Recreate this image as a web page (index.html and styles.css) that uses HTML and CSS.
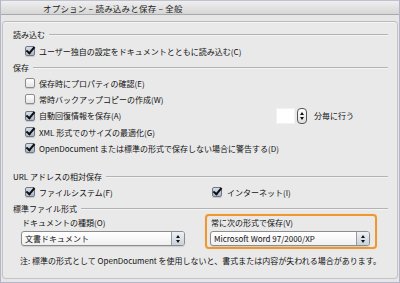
FILE: index.html
```html
<!DOCTYPE html>
<html lang="ja">
<head>
<meta charset="utf-8">
<link rel="stylesheet" href="styles.css">
</head>
<body>
<div class="window">
  <div class="titlebar"><span class="title">オプション – 読み込みと保存 – 全般</span></div>
  <div class="content">
    <div class="panel">
      <div class="head h1"><span>読み込む</span></div>
      <div class="row"><span class="cb on"></span><span>ユーザー独自の設定をドキュメントとともに読み込む(C)</span></div>

      <div class="head h2"><span>保存</span></div>
      <div class="row"><span class="cb"></span><span>保存時にプロパティの確認(E)</span></div>
      <div class="row"><span class="cb"></span><span>常時バックアップコピーの作成(W)</span></div>
      <div class="row tall">
        <div class="lbl-wide"><span class="cb on"></span><span>自動回復情報を保存(A)</span></div>
        <div class="spin">
          <span class="spin-field"></span>
          <span class="spin-btn"><span class="up"></span><span class="down"></span></span>
          <span class="spin-lbl">分毎に行う</span>
        </div>
      </div>
      <div class="row"><span class="cb on"></span><span>XML 形式でのサイズの最適化(G)</span></div>
      <div class="row"><span class="cb on"></span><span>OpenDocument または標準の形式で保存しない場合に警告する(D)</span></div>

      <div class="head h3"><span>URL アドレスの相対保存</span></div>
      <div class="row pair">
        <div class="col1"><span class="cb on"></span><span>ファイルシステム(F)</span></div>
        <div class="col2"><span class="cb on"></span><span>インターネット(I)</span></div>
      </div>

      <div class="head h4"><span>標準ファイル形式</span></div>
      <div class="formats">
        <div class="fmt-left">
          <div class="fmt-lbl">ドキュメントの種類(O)</div>
          <div class="select"><span class="sel-text">文書ドキュメント</span><span class="sel-btn"><span class="up"></span><span class="down"></span></span></div>
        </div>
        <div class="fmt-right">
          <div class="fmt-lbl">常に次の形式で保存(V)</div>
          <div class="select"><span class="sel-text">Microsoft Word 97/2000/XP</span><span class="sel-btn"><span class="up"></span><span class="down"></span></span></div>
        </div>
      </div>
      <div class="note">注: 標準の形式として OpenDocument を使用しないと、書式または内容が失われる場合があります。</div>
    </div>
  </div>
</div>
</body>
</html>
```

FILE: styles.css
```css
* { box-sizing: border-box; }
html, body { margin: 0; padding: 0; }
body {
  width: 400px;
  height: 283px;
  overflow: hidden;
  background: #e6e6e6;
  font-family: "Noto Sans CJK JP", "DejaVu Sans", sans-serif;
  font-size: 8px;
  color: #111;
}
.window {
  width: 400px;
  height: 283px;
  border: 1px solid #b3b6cb;
  border-top: none;
  background: #e6e6e6;
  display: flex;
  flex-direction: column;
}
.titlebar {
  height: 15px;
  flex: 0 0 15px;
  background: linear-gradient(#efefef, #d6d6d6);
  border-top: 1px solid #c0c2d2;
  border-bottom: 1px solid #a9a9a9;
  display: flex;
  align-items: center;
  padding-left: 42px;
}
.title {
  font-size: 8.5px;
  color: #222;
  letter-spacing: 0.2px;
}
.content {
  flex: 1;
  padding: 6px 1px 3px 1px;
}
.panel {
  height: 258px;
  border: 1px solid #c3c3c3;
  border-top-color: #b9b9b9;
  border-radius: 4px;
  background: #e9e9e9;
  box-shadow: inset 0 1px 0 #f6f6f6;
  padding: 6px 9px 0 10px;
  display: flex;
  flex-direction: column;
}
.head {
  height: 12px;
  display: flex;
  align-items: center;
  gap: 4px;
  white-space: nowrap;
}
.head::after {
  content: "";
  flex: 1;
  height: 1px;
  background: #b3b3b3;
  box-shadow: 0 1px 0 #f4f4f4;
}
.h1 { margin-top: 0; margin-bottom: 3px; }
.h2 { margin-top: 2px; margin-bottom: 2px; }
.h3 { margin-top: 14px; margin-bottom: 2px; }
.h4 { margin-top: 2px; }
.row {
  height: 16px;
  display: flex;
  align-items: center;
  gap: 4px;
  padding-left: 12px;
  white-space: nowrap;
}
.row.tall { height: 17px; gap: 0; }
.lbl-wide, .col1, .col2 {
  display: flex;
  align-items: center;
  gap: 4px;
}
.lbl-wide { width: 251px; }
.row.pair { gap: 0; }
.col1 { width: 187px; }
.col2 { gap: 5px; }
.cb {
  width: 10px;
  height: 10px;
  flex: 0 0 10px;
  border: 1px solid #8d8d8d;
  border-radius: 2px;
  background: linear-gradient(#ffffff, #e4e4e4);
  box-shadow: 0 1px 1px rgba(0,0,0,0.15);
  position: relative;
}
.cb.on {
  background: linear-gradient(#d6dde8, #a9b6c9);
  border-color: #6f7787;
}
.cb.on::after {
  content: "";
  position: absolute;
  left: 2px;
  top: -2px;
  width: 3px;
  height: 7px;
  border-right: 2px solid #111;
  border-bottom: 2px solid #111;
  transform: rotate(40deg);
}
.spin {
  display: flex;
  align-items: center;
}
.spin-field {
  width: 19px;
  height: 16px;
  background: #fff;
  box-shadow: inset 0 0 0 1px #f2f2f2;
}
.spin-btn {
  margin-left: 2px;
  width: 10px;
  height: 16px;
  border: 1px solid #555;
  border-radius: 4px;
  background: linear-gradient(#ffffff, #e0e0e0);
  display: flex;
  flex-direction: column;
  align-items: center;
  justify-content: center;
  gap: 2px;
}
.up, .down {
  width: 0;
  height: 0;
  border-left: 2px solid transparent;
  border-right: 2px solid transparent;
}
.up { border-bottom: 3px solid #111; }
.down { border-top: 3px solid #111; }
.spin-lbl { margin-left: 7px; }
.formats {
  display: flex;
  align-items: flex-start;
  padding-left: 8px;
}
.fmt-left {
  width: 164px;
  padding-top: 3px;
}
.fmt-lbl {
  height: 12px;
  line-height: 12px;
  white-space: nowrap;
  padding-left: 1px;
}
.select {
  margin-top: 2px;
  height: 15px;
  border: 1px solid #8c8c8c;
  border-radius: 3px;
  background: linear-gradient(#ffffff, #f0f0f0);
  display: flex;
  align-items: stretch;
  box-shadow: 0 1px 1px rgba(0,0,0,0.12);
}
.sel-text {
  flex: 1;
  padding-left: 3px;
  display: flex;
  align-items: center;
  white-space: nowrap;
}
.sel-btn {
  width: 13px;
  border-left: 1px solid #9a9a9a;
  border-radius: 0 2px 2px 0;
  background: linear-gradient(#eef1f6, #c9d1dc);
  display: flex;
  flex-direction: column;
  align-items: center;
  justify-content: center;
  gap: 2px;
}
.fmt-right {
  margin-left: 20px;
  width: 172px;
  border: 2px solid #f0972e;
  border-radius: 4px;
  padding: 1px 5px 1px 3px;
  box-shadow: 0 0 1px rgba(240,151,46,0.6);
}
.note {
  margin-top: 6px;
  height: 12px;
  line-height: 12px;
  padding-left: 7px;
  white-space: nowrap;
}
```
